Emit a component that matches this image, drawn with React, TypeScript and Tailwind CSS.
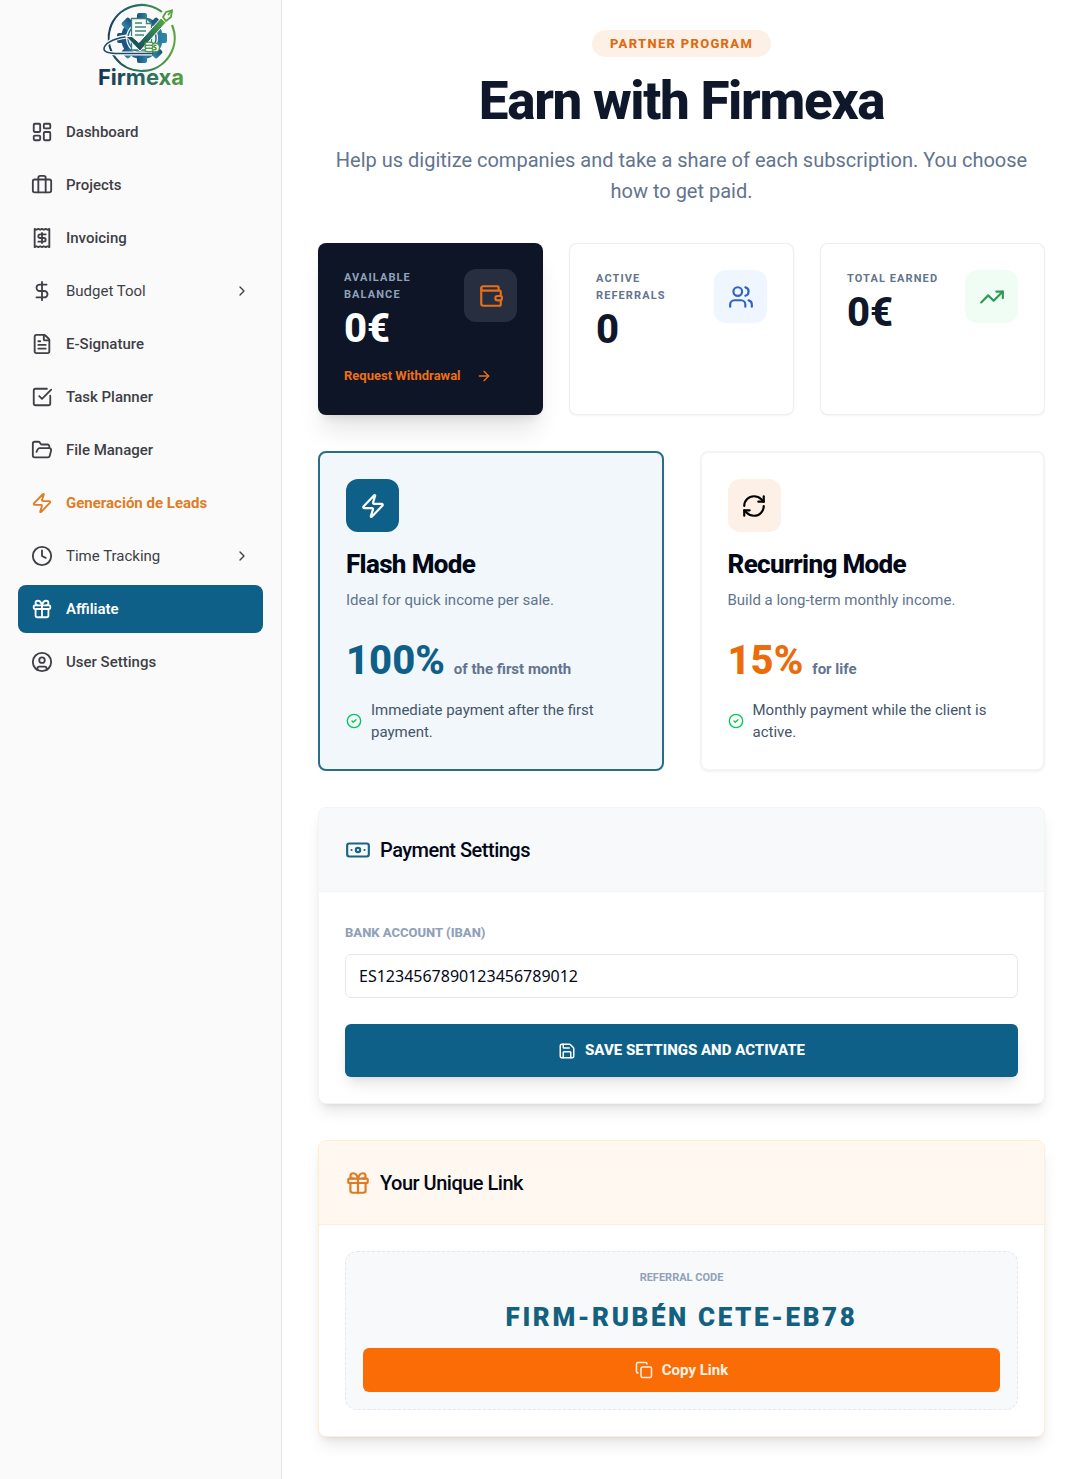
import type { ReactNode } from 'react';
import {
  ArrowRight,
  Banknote,
  Briefcase,
  ChevronRight,
  CircleCheck,
  CircleUser,
  Clock,
  Copy,
  DollarSign,
  FileText,
  FolderOpen,
  Gift,
  LayoutDashboard,
  type LucideIcon,
  Receipt,
  RefreshCw,
  Save,
  SquareCheckBig,
  TrendingUp,
  Users,
  Wallet,
  Zap,
} from 'lucide-react';

interface NavItem {
  label: string;
  icon: LucideIcon;
  style?: 'active' | 'highlight' | 'group';
}

const navItems: NavItem[] = [
  { label: 'Dashboard', icon: LayoutDashboard },
  { label: 'Projects', icon: Briefcase },
  { label: 'Invoicing', icon: Receipt },
  { label: 'Budget Tool', icon: DollarSign, style: 'group' },
  { label: 'E-Signature', icon: FileText },
  { label: 'Task Planner', icon: SquareCheckBig },
  { label: 'File Manager', icon: FolderOpen },
  { label: 'Generación de Leads', icon: Zap, style: 'highlight' },
  { label: 'Time Tracking', icon: Clock, style: 'group' },
  { label: 'Affiliate', icon: Gift, style: 'active' },
  { label: 'User Settings', icon: CircleUser },
];

const Logo = () => (
  <svg width="104" height="100" viewBox="-4 0 104 100" role="img" aria-label="Firmexa">
    <defs>
      <linearGradient id="ring" x1="0" y1="0" x2="1" y2="0">
        <stop offset="0" stopColor="#17405c" />
        <stop offset="0.5" stopColor="#2c7a63" />
        <stop offset="1" stopColor="#58a53c" />
      </linearGradient>
      <linearGradient id="word" gradientUnits="userSpaceOnUse" x1="4" y1="0" x2="93" y2="0">
        <stop offset="0" stopColor="#16304f" />
        <stop offset="0.5" stopColor="#246361" />
        <stop offset="1" stopColor="#5aa53a" />
      </linearGradient>
      <linearGradient id="gear" x1="0" y1="0" x2="1" y2="0">
        <stop offset="0" stopColor="#1b4f7c" />
        <stop offset="1" stopColor="#2f86a8" />
      </linearGradient>
      <linearGradient id="tick" x1="0" y1="1" x2="1" y2="0">
        <stop offset="0" stopColor="#153a5a" />
        <stop offset="0.5" stopColor="#25705a" />
        <stop offset="1" stopColor="#5fae3e" />
      </linearGradient>
    </defs>
    {/* gear */}
    <g fill="url(#gear)">
      <circle cx="49" cy="38" r="21" />
      <rect x="44" y="13" width="10" height="50" rx="2" />
      <rect x="44" y="13" width="10" height="50" rx="2" transform="rotate(45 49 38)" />
      <rect x="24" y="33" width="50" height="10" rx="2" />
      <rect x="44" y="13" width="10" height="50" rx="2" transform="rotate(135 49 38)" />
    </g>
    <circle cx="49" cy="38" r="16" fill="#fafafa" />
    <circle cx="49" cy="38" r="14" fill="none" stroke="#2a6f92" strokeWidth="1.5" />
    {/* ring */}
    <path d="M69 12A33 33 0 1 0 79 25" fill="none" stroke="url(#ring)" strokeWidth="2.200" />
    {/* sheet */}
    <path d="M38.500 18.500h15l5 5V50h-20z" fill="#fafafa" stroke="#3d7f77" strokeWidth="1.300" />
    <path d="M53.500 18.500v5h5M42 23h7M42 27h11M42 31h11M42 35h9" fill="none" stroke="#3d8a74" strokeWidth="1.400" />
    {/* orbit swoosh */}
    <path d="M34 36.500C20 38 11 44 11 49c0 4 8 4.500 15 4.500h33" fill="none" stroke="#fafafa" strokeWidth="4" />
    <path d="M32 37C19 39 11 44 11 49c0 4 8 4.500 15 4.500h33" fill="none" stroke="#1d4a66" strokeWidth="1.600" strokeLinecap="round" />
    {/* pen tick */}
    <path d="M33 36.500h6l7 6 22-24.500 5 4.500L47 51z" fill="url(#tick)" stroke="#fafafa" strokeWidth="1" />
    <path d="M70 17l3-5 6-1.500-1 6.500-5 4z" fill="#fafafa" stroke="#55a23e" strokeWidth="1.800" />
    <path d="M79 10l-4 5" stroke="#55a23e" strokeWidth="1.500" />
    {/* coins */}
    <g fill="#fafafa" stroke="#4a9548" strokeWidth="1.300">
      <circle cx="62" cy="47.500" r="4.500" />
      <ellipse cx="56" cy="44" rx="4" ry="1.800" />
      <ellipse cx="56" cy="47" rx="4" ry="1.800" />
      <ellipse cx="56" cy="50" rx="4" ry="1.800" />
      <path d="M63.500 45.500c-3-1-3.500 1.800-1.500 2s1.500 3-1.500 2" fill="none" />
    </g>
    <text
      x="48"
      y="85"
      textAnchor="middle"
      fontFamily="Inter, sans-serif"
      fontSize="22"
      fontWeight="700"
      fill="url(#word)"
      stroke="#fafafa"
      strokeWidth="2"
      paintOrder="stroke"
    >
      Firmexa
    </text>
  </svg>
);

const Sidebar = () => (
  <aside className="w-[282px] shrink-0 border-r border-gray-200 bg-[#fafafa]">
    <a href="#home" className="flex justify-center">
      <Logo />
    </a>
    <nav className="mt-2 flex flex-col gap-[5px] px-[18px]">
      {navItems.map(({ label, icon: Icon, style }) => (
        <a
          key={label}
          href="#"
          className={`flex h-12 items-center gap-[13px] rounded-lg px-[13px] text-[15px] ${
            style === 'active'
              ? 'bg-[#0e6088] font-semibold text-white'
              : style === 'highlight'
                ? 'font-bold text-[#e07c24]'
                : style === 'group'
                  ? 'font-normal text-[#3f3f46]'
                  : 'font-medium text-[#3f3f46]'
          }`}
        >
          <Icon size={22} strokeWidth={2} />
          <span className="flex-1">{label}</span>
          {style === 'group' && <ChevronRight size={16} />}
        </a>
      ))}
    </nav>
  </aside>
);

interface StatCardProps {
  title: string;
  value: string;
  icon: ReactNode;
  iconClass: string;
  dark?: boolean;
  children?: ReactNode;
}

const StatCard = ({ title, value, icon, iconClass, dark, children }: StatCardProps) => (
  <div
    className={`flex min-h-[172px] flex-col rounded-lg p-[26px] ${
      dark ? 'bg-[#0d1526] text-white shadow-xl' : 'border border-gray-200/70 bg-white text-[#0f172a] shadow-xs'
    }`}
  >
    <div className="flex items-start justify-between gap-4">
      <div>
        <p className={`text-[11px] leading-[17px] font-bold tracking-widest uppercase ${dark ? 'text-slate-400' : 'text-slate-500'}`}>
          {title}
        </p>
        <p className="text-[40px] leading-[52px] font-extrabold">{value}</p>
      </div>
      <div className={`flex size-[53px] shrink-0 items-center justify-center rounded-xl ${iconClass}`}>{icon}</div>
    </div>
    {children}
  </div>
);

interface ModeCardProps {
  title: string;
  description: string;
  rate: string;
  rateNote: string;
  perk: string;
  icon: ReactNode;
  selected?: boolean;
}

const ModeCard = ({ title, description, rate, rateNote, perk, icon, selected }: ModeCardProps) => (
  <button
    type="button"
    aria-pressed={!!selected}
    className={`flex flex-col items-start rounded-lg border-2 p-[26px] text-left ${
      selected ? 'border-[#2a6d86] bg-[#f1f7fa]' : 'border-gray-100 bg-white shadow-xs'
    }`}
  >
    <span
      className={`flex size-[53px] items-center justify-center rounded-xl ${
        selected ? 'bg-[#0e6088] text-white' : 'bg-[#fdf0e7] text-black'
      }`}
    >
      {icon}
    </span>
    <span className="mt-4 text-[26px] leading-[33px] font-extrabold tracking-tight text-[#020817]">{title}</span>
    <span className="mt-2 text-[15px] leading-[22px] text-slate-500">{description}</span>
    <span className="mt-[26px] flex items-baseline gap-[9px]">
      <span className={`text-[40px] leading-[48px] font-extrabold ${selected ? 'text-[#0e6088]' : 'text-[#ec6c0c]'}`}>{rate}</span>
      <span className="text-[15px] font-bold text-slate-500">{rateNote}</span>
    </span>
    <span className="mt-[14px] flex items-center gap-[9px] text-[15px] leading-[22px] text-slate-600">
      <CircleCheck size={16} className="shrink-0 text-green-500" />
      {perk}
    </span>
  </button>
);

const App = () => {
  return (
    <div className="flex min-h-screen bg-white font-[Roboto,sans-serif] text-[#020817]">
      <Sidebar />

      <main className="flex flex-1 flex-col gap-9 pt-[30px] pr-[35px] pb-10 pl-9">
        <header className="flex flex-col items-center text-center">
          <span className="rounded-full bg-[#fdf0e6] px-[18px] py-1 text-[13px] leading-[19px] font-extrabold tracking-widest text-[#de6a12] uppercase">
            Partner Program
          </span>
          <h1 className="mt-[18px] text-[53px] leading-[53px] font-extrabold tracking-tight text-[#0f172a]">Earn with Firmexa</h1>
          <p className="mt-[17px] max-w-[740px] text-[20px] leading-[31px] text-slate-500">
            Help us digitize companies and take a share of each subscription. You choose how to get paid.
          </p>
        </header>

        <section className="grid grid-cols-3 gap-[26px]">
          <StatCard
            dark
            title="Available Balance"
            value="0€"
            icon={<Wallet size={26} />}
            iconClass="bg-[#262e3f] text-[#e8701a]"
          >
            <button type="button" className="mt-3 flex items-center gap-[15px] text-[13px] leading-[18px] font-bold text-[#ee6f17]">
              Request Withdrawal
              <ArrowRight size={16} />
            </button>
          </StatCard>
          <StatCard title="Active Referrals" value="0" icon={<Users size={26} />} iconClass="bg-blue-50 text-[#2f64c4]" />
          <StatCard title="Total Earned" value="0€" icon={<TrendingUp size={26} />} iconClass="bg-green-50 text-[#2f9a55]" />
        </section>

        <section className="grid grid-cols-2 gap-9">
          <ModeCard
            selected
            title="Flash Mode"
            description="Ideal for quick income per sale."
            rate="100%"
            rateNote="of the first month"
            perk="Immediate payment after the first payment."
            icon={<Zap size={26} />}
          />
          <ModeCard
            title="Recurring Mode"
            description="Build a long-term monthly income."
            rate="15%"
            rateNote="for life"
            perk="Monthly payment while the client is active."
            icon={<RefreshCw size={26} />}
          />
        </section>

        <section className="overflow-hidden rounded-lg border border-gray-100 bg-white shadow-lg">
          <div className="flex h-[84px] items-center gap-[9px] border-b border-gray-100 bg-[#f7f9fb] px-[26px]">
            <Banknote size={26} className="text-[#1b6583]" />
            <h2 className="text-[20px] leading-7 font-medium tracking-tight">Payment Settings</h2>
          </div>
          <form className="flex flex-col px-[26px] pt-8 pb-[26px]">
            <label htmlFor="iban" className="text-[13px] leading-[18px] font-extrabold text-slate-400 uppercase">
              Bank Account (IBAN)
            </label>
            <input
              id="iban"
              type="text"
              defaultValue="ES1234567890123456789012"
              className="mt-3 h-11 rounded-md border border-gray-200 px-[13px] font-['Noto_Sans',sans-serif] text-[16px]"
            />
            <button
              type="button"
              className="mt-[26px] flex h-[53px] items-center justify-center gap-[9px] rounded-md bg-[#0e6088] text-[15px] font-extrabold text-white shadow-lg"
            >
              <Save size={18} />
              SAVE SETTINGS AND ACTIVATE
            </button>
          </form>
        </section>

        <section className="overflow-hidden rounded-lg border border-orange-100 bg-white shadow-lg">
          <div className="flex h-[84px] items-center gap-[9px] border-b border-orange-100 bg-[#fef8f0] px-[26px]">
            <Gift size={26} className="text-[#e07a22]" />
            <h2 className="text-[20px] leading-7 font-medium tracking-tight">Your Unique Link</h2>
          </div>
          <div className="p-[26px]">
            <div className="flex flex-col rounded-xl border border-dashed border-slate-200 bg-[#f7f9fb] p-[17px] text-center">
              <p className="text-[11px] leading-[17px] font-bold text-slate-400 uppercase">Referral Code</p>
              <p className="mt-[13px] text-[26px] leading-9 font-black tracking-widest text-[#14607f]">FIRM-RUBÉN CETE-EB78</p>
              <button
                type="button"
                className="mt-[13px] flex h-11 items-center justify-center gap-[9px] rounded-md bg-[#fa6c06] text-[15px] font-bold text-[#fff3e6]"
              >
                <Copy size={18} />
                Copy Link
              </button>
            </div>
          </div>
        </section>
      </main>
    </div>
  );
};

export default App;
